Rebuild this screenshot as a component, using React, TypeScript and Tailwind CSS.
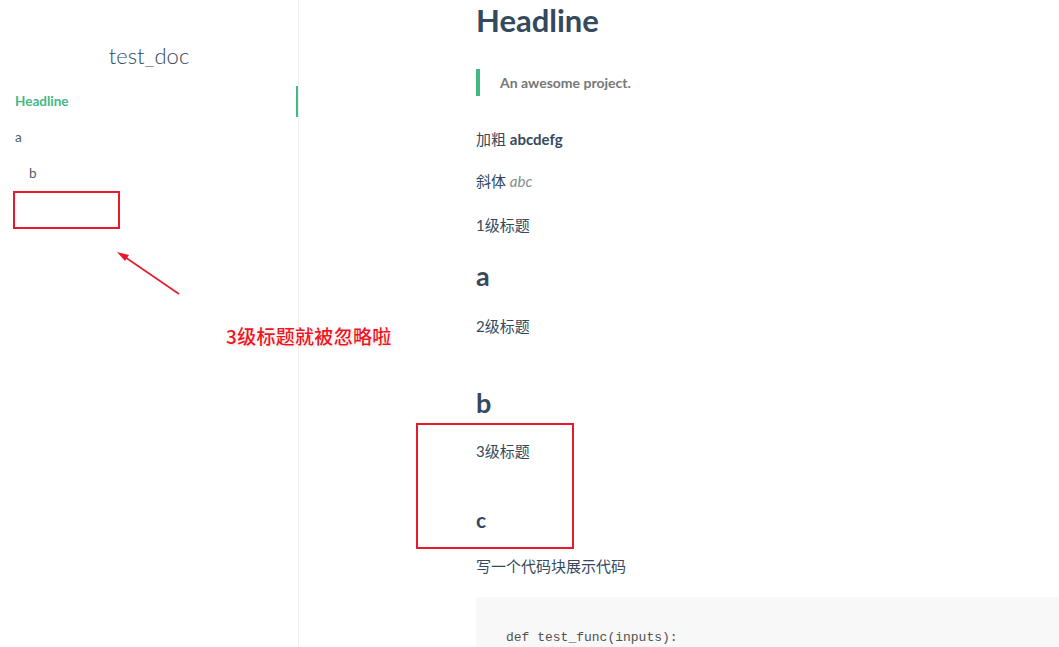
import React from 'react';

const body = '"Lato", "Noto Sans CJK SC", sans-serif';

const Annotations: React.FC = () => (
  <>
    <div className="absolute left-[13px] top-[191px] w-[107px] h-[38px] border-2 border-[#e8192c]" />
    <div className="absolute left-[416px] top-[423px] w-[158px] h-[126px] border-2 border-[#e8192c]" />
    <svg className="absolute left-0 top-0" width="1059" height="647" style={{ pointerEvents: 'none' }}>
      <line x1="179" y1="294" x2="122" y2="255" stroke="#e8192c" strokeWidth="1.6" />
      <polygon points="117,252 129,255 125,261" fill="#e8192c" />
    </svg>
    <div
      className="absolute left-[226px] top-[322px] text-[19px] font-medium text-[#f0141e] tracking-[0.3px]"
      style={{ fontFamily: '"Noto Sans CJK SC", sans-serif', textShadow: '0 0 2px #fff, 0 0 3px #fff, 1px 1px 3px #ccc' }}
    >
      3级标题就被忽略啦
    </div>
  </>
);

export default function App() {
  return (
    <div className="relative w-[1059px] h-[647px] overflow-hidden bg-white flex" style={{ fontFamily: body }}>
      <aside className="w-[299px] shrink-0 border-r border-[#eee] h-full">
        <h1 className="text-center text-[22px] font-light text-[#34495e] mt-[40px] leading-[32px]">test_doc</h1>
        <ul className="mt-[14px] text-[13.5px]">
          <li className="relative h-[31px] flex items-center pl-[15px] font-bold text-[#42b983]">
            Headline
            <span className="absolute right-0 top-0 h-[31px] w-[2px] bg-[#42b983]" />
          </li>
          <li className="h-[40px] flex items-center pl-[15px] text-[#505d6b]">a</li>
          <li className="h-[32px] flex items-center pl-[29px] text-[#505d6b]">b</li>
        </ul>
      </aside>
      <main className="flex-1 pl-[177px] text-[15px] text-[#34495e]">
        <h1 className="text-[31px] font-bold leading-[40px]">Headline</h1>
        <blockquote className="mt-[29px] border-l-4 border-[#42b983] h-[27px] flex items-center pl-[20px] text-[14px] font-bold text-[#777]">
          An awesome project.
        </blockquote>
        <p className="mt-[31px] leading-[24px]">
          加粗 <strong className="font-bold">abcdefg</strong>
        </p>
        <p className="mt-[18px] leading-[24px]">
          斜体 <em className="text-[#7f8c8d]">abc</em>
        </p>
        <p className="mt-[20px] leading-[24px]">1级标题</p>
        <h2 className="mt-[22px] text-[27px] font-bold leading-[34px]">a</h2>
        <p className="mt-[21px] leading-[24px]">2级标题</p>
        <h2 className="mt-[48px] text-[27px] font-bold leading-[34px]">b</h2>
        <p className="mt-[19px] leading-[24px]">3级标题</p>
        <h3 className="mt-[43px] text-[21px] font-bold leading-[28px]">c</h3>
        <p className="mt-[20px] leading-[24px]">写一个代码块展示代码</p>
        <pre className="mt-[19px] bg-[#f8f8f8] h-[80px] w-[700px] pt-[32px] pl-[30px] text-[13px] leading-[18px] text-[#525252]" style={{ fontFamily: '"Liberation Mono", monospace' }}>
          {'def test_func(inputs):'}
        </pre>
      </main>
      <Annotations />
    </div>
  );
}
